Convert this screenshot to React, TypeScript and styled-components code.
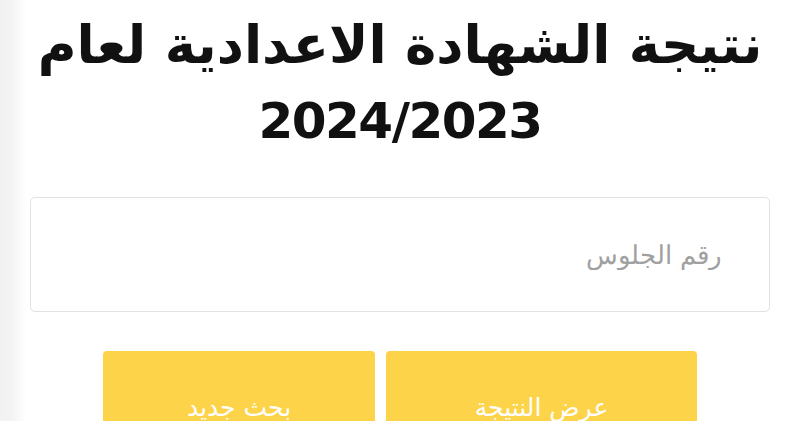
import styled, { createGlobalStyle } from "styled-components";

const GlobalStyle = createGlobalStyle`
  html, body {
    margin: 0;
    padding: 0;
    height: 100%;
    overflow: hidden;
  }
  body {
    background: linear-gradient(to right, #f1f1f1 0, #f3f3f3 12px, #fafafa 20px, #ffffff 26px);
    font-family: "DejaVu Sans", "Noto Sans", sans-serif;
  }
`;

function App() {
  return (
    <>
      <GlobalStyle />
      <Page dir="rtl">
        <Title>
          <TitleLine $size={53} $lineHeight={82}>
            نتيجة الشهادة الاعدادية لعام
          </TitleLine>
          <TitleLine $size={50} $lineHeight={70} $tight>
            2024/2023
          </TitleLine>
        </Title>
        <SeatInput type="text" placeholder="رقم الجلوس" />
        <Actions>
          <ActionButton $width={311}>عرض النتيجة</ActionButton>
          <ActionButton $width={272}>بحث جديد</ActionButton>
        </Actions>
      </Page>
    </>
  );
}

const Page = styled.div`
  display: flex;
  flex-direction: column;
  align-items: center;
  padding: 4px 30px 0;
`;

const Title = styled.h1`
  margin: 0;
  display: flex;
  flex-direction: column;
  align-items: center;
  color: #111111;
  font-weight: 700;
`;

const TitleLine = styled.span<{ $size: number; $lineHeight: number; $tight?: boolean }>`
  display: block;
  white-space: nowrap;
  font-size: ${(p) => p.$size}px;
  line-height: ${(p) => p.$lineHeight}px;
  letter-spacing: ${(p) => (p.$tight ? "-1.5px" : "normal")};
`;

const SeatInput = styled.input`
  box-sizing: border-box;
  width: 100%;
  height: 115px;
  margin-top: 41px;
  padding: 0 47px;
  border: 1px solid #e2e2e2;
  border-radius: 5px;
  background: #ffffff;
  font-family: "DejaVu Sans", sans-serif;
  font-size: 26px;
  font-weight: 300;
  color: #333333;
  outline: none;

  &::placeholder {
    color: #a0a0a0;
  }
`;

const Actions = styled.div`
  display: flex;
  justify-content: center;
  gap: 11px;
  margin-top: 39px;
`;

const ActionButton = styled.button<{ $width: number }>`
  display: flex;
  align-items: flex-start;
  justify-content: center;
  box-sizing: border-box;
  width: ${(p) => p.$width}px;
  height: 70px;
  padding: 44px 0 0;
  border: none;
  border-radius: 4px 4px 0 0;
  background: #fdd34a;
  color: #ffffff;
  font-family: "DejaVu Sans", sans-serif;
  font-size: 25px;
  line-height: 26px;
  cursor: pointer;
`;

export default App;
